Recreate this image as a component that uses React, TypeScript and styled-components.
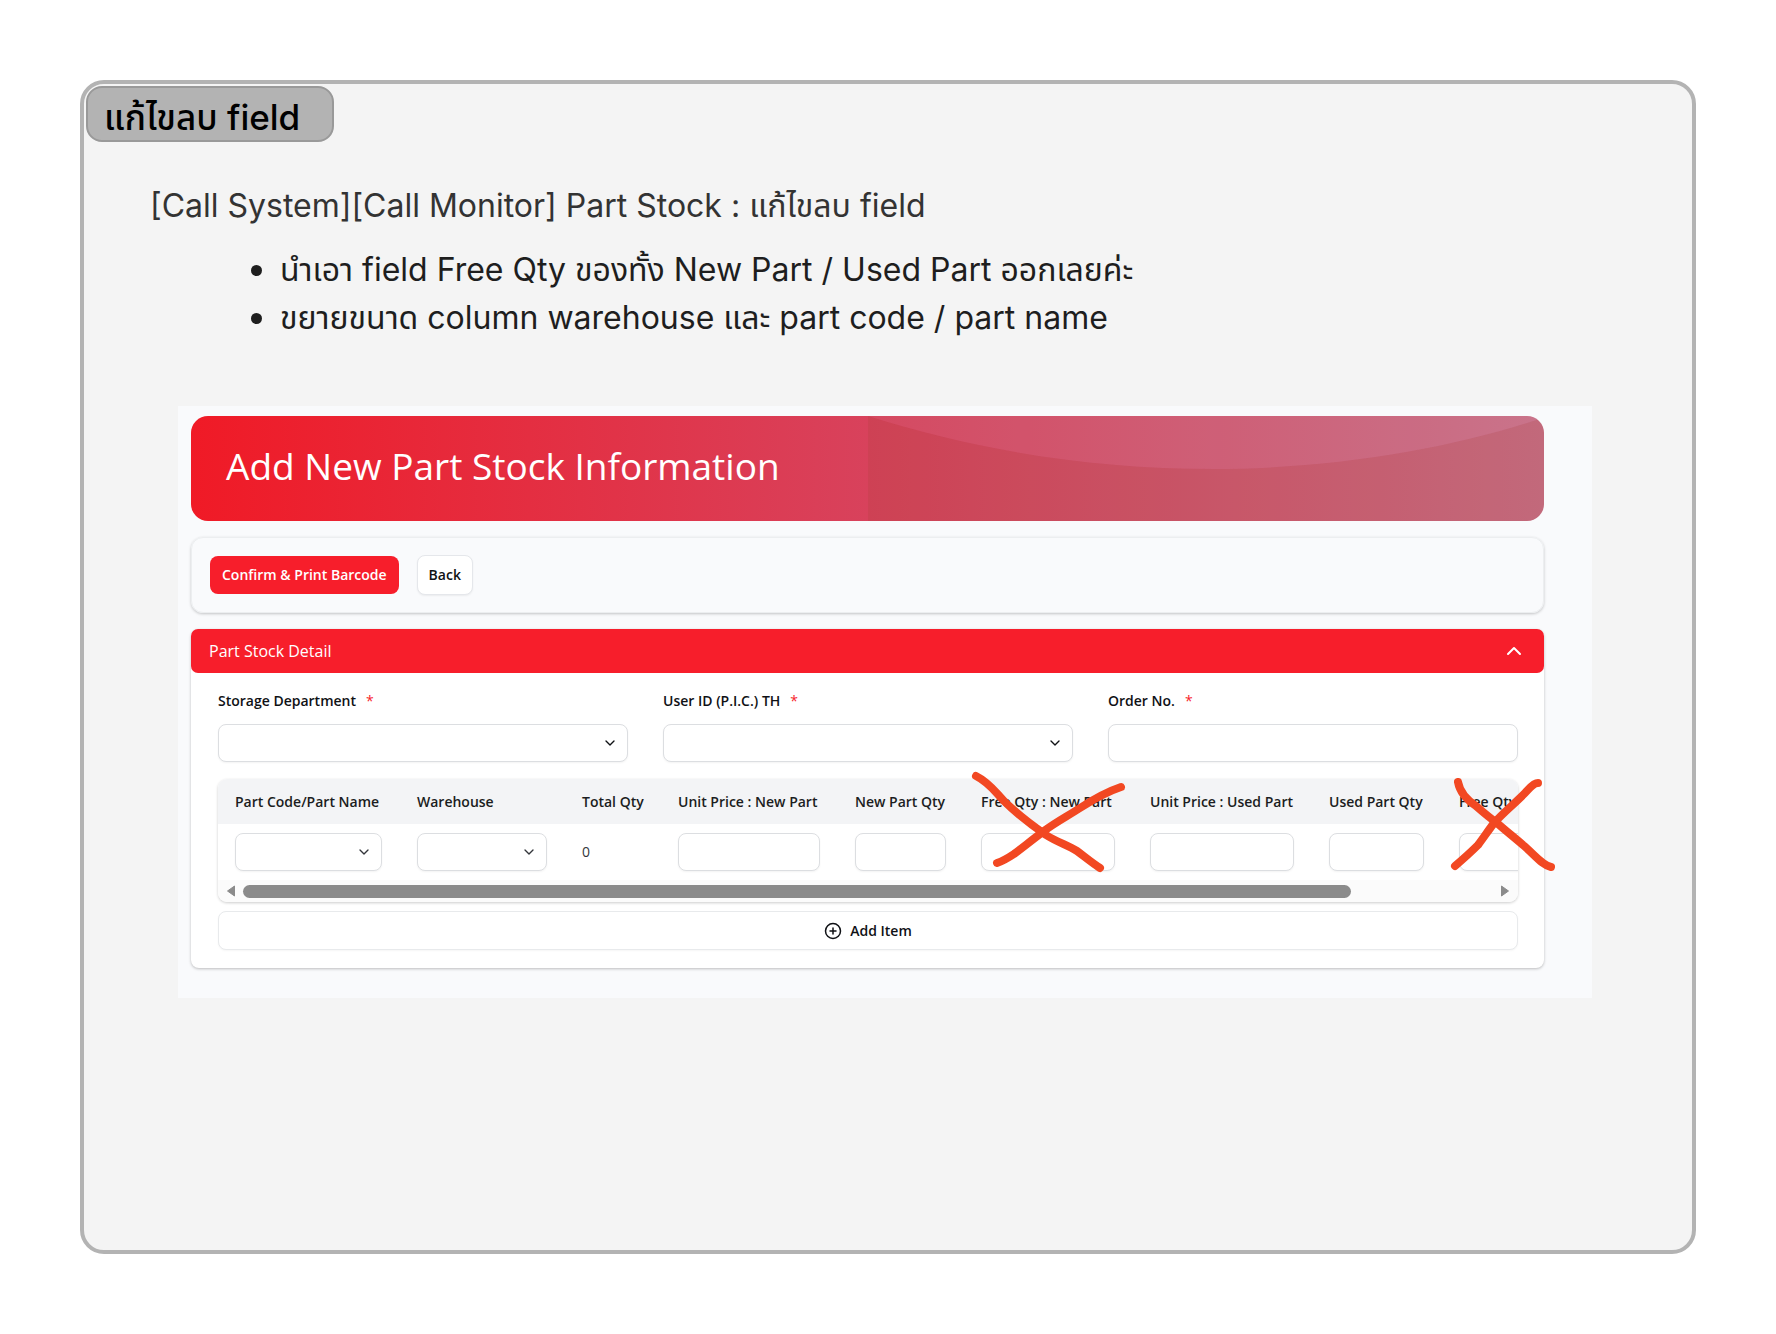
import React, { useId, useRef } from "react";
import styled, { createGlobalStyle } from "styled-components";
import { ChevronDown, ChevronUp, CirclePlus } from "lucide-react";

const GlobalStyle = createGlobalStyle`
  *, *::before, *::after { box-sizing: border-box; }
  body { margin: 0; background: #ffffff; }
  button, input, select { font: inherit; color: inherit; margin: 0; }
`;

const uiFont = `"Open Sans", "Noto Sans", sans-serif`;
const noteFont = `Inter, "Noto Sans Thai", "Noto Sans", sans-serif`;

const Board = styled.main`
  display: flex;
  min-height: 100vh;
  padding: 80px;
  font-family: ${noteFont};
`;

const Frame = styled.section`
  flex: 1;
  min-width: 0;
  background: #f4f4f4;
  border: 4px solid #b3b3b3;
  border-radius: 24px;
  padding: 2px;
`;

const Tag = styled.h1`
  display: flex;
  align-items: center;
  width: 248px;
  height: 56px;
  margin: 0;
  padding: 6px 16px 0;
  background: #b3b3b3;
  border: 2px solid #999999;
  border-radius: 16px;
  font-size: 35px;
  font-weight: 500;
  line-height: 48px;
  color: #000000;
  white-space: nowrap;
`;

const Notes = styled.div`
  padding: 40px 64px 0;
  font-size: 32px;
  line-height: 48px;
`;

const NoteTitle = styled.p`
  margin: 0;
  color: #333333;
`;

const NoteList = styled.ul`
  margin: 16px 0 0;
  padding: 0 0 0 130px;
  color: #1e1e1e;
  list-style: none;
`;

const NoteItem = styled.li`
  display: flex;
  align-items: center;
  &::before {
    content: "";
    flex: none;
    width: 11px;
    height: 11px;
    margin: 0 18px 0 -29px;
    border-radius: 50%;
    background: #1e1e1e;
  }
`;

const Panel = styled.div`
  position: relative;
  display: flex;
  flex-direction: column;
  gap: 16px;
  margin: 64px 98px 0 92px;
  padding: 10px 48px 30px 13px;
  background: #f9fafc;
  font-family: ${uiFont};
  font-size: 14px;
  line-height: 20px;
  color: #0f1115;
`;

const Banner = styled.header`
  position: relative;
  display: flex;
  align-items: center;
  height: 105px;
  padding: 0 35px 6px;
  overflow: hidden;
  border-radius: 17px;
  background: linear-gradient(90deg, #f01a26 0%, #d8425c 50%, #cb7089 100%);
`;

const BannerTitle = styled.h2`
  margin: 0;
  font-size: 37px;
  font-weight: 400;
  line-height: 48px;
  color: #ffffff;
  white-space: nowrap;
`;

const BannerArt = styled.svg`
  position: absolute;
  top: 0;
  right: 0;
  width: 50%;
  height: 100%;
`;

const Actions = styled.div`
  display: flex;
  align-items: center;
  gap: 18px;
  height: 76px;
  padding: 0 18px;
  border: 1px solid #eceef0;
  border-radius: 12px;
  box-shadow: 0 1px 3px rgba(0, 0, 0, 0.22);
`;

const Button = styled.button<{ $primary?: boolean }>`
  height: ${(p) => (p.$primary ? 38 : 40)}px;
  padding: 0 ${(p) => (p.$primary ? 12 : 11)}px;
  border: ${(p) => (p.$primary ? "0" : "1px solid #e5e7eb")};
  border-radius: 8px;
  background: ${(p) => (p.$primary ? "#f71e2b" : "#ffffff")};
  box-shadow: ${(p) => (p.$primary ? "none" : "0 1px 2px rgba(0, 0, 0, 0.06)")};
  color: ${(p) => (p.$primary ? "#ffffff" : "#0f1115")};
  font-weight: 600;
  white-space: nowrap;
`;

const Card = styled.section`
  border-radius: 8px;
  background: #ffffff;
  box-shadow: 0 1px 3px rgba(0, 0, 0, 0.25);
`;

const CardHead = styled.button`
  display: flex;
  align-items: center;
  justify-content: space-between;
  width: 100%;
  height: 44px;
  padding: 0 18px;
  border: 0;
  border-radius: 7px;
  background: #f71e2b;
  color: #ffffff;
  font-size: 16px;
`;

const CardBody = styled.div`
  padding: 18px 26px 18px 27px;
`;

const Fields = styled.div`
  display: grid;
  grid-template-columns: repeat(3, 1fr);
  gap: 35px;
`;

const Field = styled.div`
  display: flex;
  flex-direction: column;
  gap: 13px;
`;

const Label = styled.label`
  font-weight: 600;
`;

const Required = styled.span`
  margin-left: 10px;
  font-weight: 400;
  color: #f71e2b;
`;

const TextBox = styled.input`
  display: block;
  width: 100%;
  height: 38px;
  padding: 0 10px;
  border: 1px solid #dcdee1;
  border-radius: 8px;
  background: #ffffff;
  box-shadow: 0 1px 2px rgba(0, 0, 0, 0.05);
`;

const SelectWrap = styled.div`
  position: relative;
  svg {
    position: absolute;
    right: 10px;
    top: 11px;
    pointer-events: none;
  }
`;

const SelectBox = styled(TextBox).attrs({ as: "select" })`
  appearance: none;
`;

const TableBox = styled.div`
  margin-top: 17px;
  overflow: hidden;
  border-radius: 9px;
  box-shadow: 0 1px 3px rgba(0, 0, 0, 0.2);
`;

const TableScroll = styled.div`
  overflow-x: auto;
  scrollbar-width: none;
`;

const Table = styled.table`
  width: 1467px;
  table-layout: fixed;
  border-collapse: collapse;
`;

const Col = styled.col<{ $w: number }>`
  width: ${(p) => p.$w}px;
`;

const Th = styled.th`
  height: 45px;
  padding: 0 18px 0 17px;
  background: #f3f4f6;
  font-weight: 600;
  text-align: left;
  white-space: nowrap;
  color: #1b1d21;
`;

const Td = styled.td`
  height: 56px;
  padding: 0 18px 0 17px;
  color: #33363b;
`;

const ScrollBar = styled.div`
  display: flex;
  align-items: center;
  gap: 7px;
  height: 22px;
  padding: 0 8px;
  background: #fbfbfb;
`;

const ScrollArrow = styled.button`
  display: flex;
  padding: 0;
  border: 0;
  background: none;
`;

const Track = styled.div`
  flex: 1;
`;

const Thumb = styled.div`
  width: calc(100% * 1300 / 1467);
  height: 13px;
  border-radius: 7px;
  background: #8b8b8b;
`;

const AddButton = styled.button`
  display: flex;
  align-items: center;
  justify-content: center;
  gap: 8px;
  width: 100%;
  height: 39px;
  margin-top: 9px;
  border: 1px solid #e8eaec;
  border-radius: 8px;
  background: #ffffff;
  box-shadow: 0 1px 2px rgba(0, 0, 0, 0.04);
  font-weight: 600;
`;

const Cross = styled.svg<{ $x: number; $y: number }>`
  position: absolute;
  left: ${(p) => p.$x}px;
  top: ${(p) => p.$y}px;
  fill: none;
  stroke: #f24822;
  stroke-width: 8px;
  stroke-linecap: round;
  stroke-linejoin: round;
  pointer-events: none;
`;

function Select({ id, label }: { id?: string; label?: string }) {
  return (
    <SelectWrap>
      <SelectBox id={id} aria-label={label} />
      <ChevronDown size={16} strokeWidth={2} />
    </SelectWrap>
  );
}

function FormField({ label, select }: { label: string; select?: boolean }) {
  const id = useId();
  return (
    <Field>
      <Label htmlFor={id}>
        {label}
        <Required>*</Required>
      </Label>
      {select ? <Select id={id} /> : <TextBox id={id} type="text" />}
    </Field>
  );
}

const columns: { name: string; width: number; kind: "select" | "value" | "input" }[] = [
  { name: "Part Code/Part Name", width: 182, kind: "select" },
  { name: "Warehouse", width: 165, kind: "select" },
  { name: "Total Qty", width: 96, kind: "value" },
  { name: "Unit Price : New Part", width: 177, kind: "input" },
  { name: "New Part Qty", width: 126, kind: "input" },
  { name: "Free Qty : New Part", width: 169, kind: "input" },
  { name: "Unit Price : Used Part", width: 179, kind: "input" },
  { name: "Used Part Qty", width: 130, kind: "input" },
  { name: "Free Qty : Used Part", width: 243, kind: "input" },
];

function PartTable() {
  const scroller = useRef<HTMLDivElement>(null);
  const scroll = (by: number) => scroller.current?.scrollBy({ left: by });
  return (
    <TableBox>
      <TableScroll ref={scroller}>
        <Table>
          <colgroup>
            {columns.map((c) => (
              <Col key={c.name} $w={c.width} />
            ))}
          </colgroup>
          <thead>
            <tr>
              {columns.map((c) => (
                <Th key={c.name} scope="col">{c.name}</Th>
              ))}
            </tr>
          </thead>
          <tbody>
            <tr>
              {columns.map((c) => (
                <Td key={c.name}>
                  {c.kind === "select" && <Select label={c.name} />}
                  {c.kind === "input" && <TextBox type="text" aria-label={c.name} />}
                  {c.kind === "value" && "0"}
                </Td>
              ))}
            </tr>
          </tbody>
        </Table>
      </TableScroll>
      <ScrollBar>
        <ScrollArrow type="button" aria-label="Scroll left" onClick={() => scroll(-80)}>
          <svg width="10" height="12" viewBox="0 0 10 12">
            <path d="M8.5 1v10L1.5 6z" fill="#8b8b8b" stroke="#8b8b8b" strokeLinejoin="round" />
          </svg>
        </ScrollArrow>
        <Track>
          <Thumb />
        </Track>
        <ScrollArrow type="button" aria-label="Scroll right" onClick={() => scroll(80)}>
          <svg width="10" height="12" viewBox="0 0 10 12">
            <path d="M1.5 1v10L8.5 6z" fill="#8b8b8b" stroke="#8b8b8b" strokeLinejoin="round" />
          </svg>
        </ScrollArrow>
      </ScrollBar>
    </TableBox>
  );
}

export default function App() {
  return (
    <>
      <GlobalStyle />
      <Board>
        <Frame>
          <Tag>แก้ไขลบ field</Tag>
          <Notes>
            <NoteTitle>[Call System][Call Monitor] Part Stock : แก้ไขลบ field</NoteTitle>
            <NoteList>
              <NoteItem>นำเอา field Free Qty ของทั้ง New Part / Used Part ออกเลยค่ะ</NoteItem>
              <NoteItem>ขยายขนาด column warehouse และ part code / part name</NoteItem>
            </NoteList>
          </Notes>
          <Panel>
            <Banner>
              <BannerArt viewBox="0 0 676 105" preserveAspectRatio="none" aria-hidden="true">
                <path d="M0 0C110 35 225 53 345 53S580 33 668 4L676 0V105H0z" fill="#8a3a20" fillOpacity="0.13" />
                <path d="M0 0C110 35 225 53 345 53S580 33 668 4L676 0z" fill="#b0a0a0" fillOpacity="0.08" />
              </BannerArt>
              <BannerTitle>Add New Part Stock Information</BannerTitle>
            </Banner>
            <Actions>
              <Button type="button" $primary>Confirm &amp; Print Barcode</Button>
              <Button type="button">Back</Button>
            </Actions>
            <Card>
              <CardHead type="button" aria-expanded="true">
                Part Stock Detail
                <ChevronUp size={24} strokeWidth={2} />
              </CardHead>
              <CardBody>
                <Fields>
                  <FormField label="Storage Department" select />
                  <FormField label="User ID (P.I.C.) TH" select />
                  <FormField label="Order No." />
                </Fields>
                <PartTable />
                <AddButton type="button">
                  <CirclePlus size={18} strokeWidth={2} />
                  Add Item
                </AddButton>
              </CardBody>
            </Card>
            <Cross $x={792} $y={364} width="160" height="110" viewBox="970 770 160 110">
              <path d="M976 776C990 783 996 793 1004 801C1018 815 1030 824 1046 835C1057 842 1067 845 1077 851C1085 857 1092 863 1100 868" />
              <path d="M1121 787C1106 792 1094 799 1080 808C1066 817 1056 822 1044 831C1032 840 1022 848 1014 854C1008 858 1003 861 997 863" />
            </Cross>
            <Cross $x={1272} $y={370} width="120" height="110" viewBox="1450 776 120 110">
              <path d="M1458 782C1460 793 1467 800 1476 806C1484 813 1490 818 1497 823C1506 831 1515 838 1523 845C1535 855 1542 865 1551 867" />
              <path d="M1538 783C1533 783 1529 789 1525 793C1513 805 1503 813 1494 823C1488 831 1484 837 1478 845C1470 853 1462 860 1455 866" />
            </Cross>
          </Panel>
        </Frame>
      </Board>
    </>
  );
}
